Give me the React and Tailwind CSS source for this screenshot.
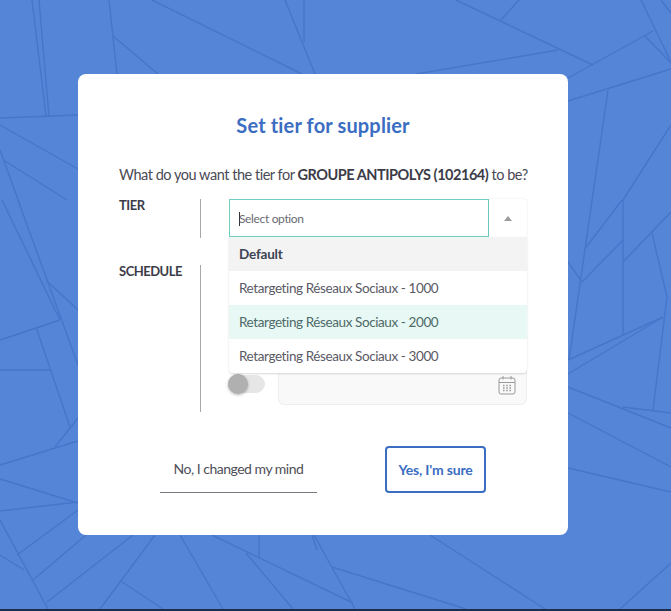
const LINES = [
  [32,0,46,116],[39,0,49,116],[0,118,78,115],[109,0,117,74],[113,36,158,74],[152,0,302,74],[285,0,315,74],[304,0,304,42],
  [0,125,78,169],[0,150,20,205],[5,161,67,200],[456,0,593,65],[501,20,519,0],[416,74,558,50],[568,78,653,31],[568,101,671,69],
  [641,0,671,62],[661,0,671,13],[644,35,671,63],[608,90,569,360],[623,200,671,125],[622,200,584,250],[568,262,582,282],[582,282,623,240],
  [623,200,623,335],[623,262,671,212],[652,233,667,297],[667,297,653,410],[568,360,663,317],[568,374,663,317],[568,387,671,428],[623,407,671,413],
  [568,413,671,467],[568,468,671,492],[620,609,671,563],
  [2,200,60,320],[18,200,78,365],[48,282,78,310],[0,340,60,320],[36,327,70,427],[0,370,50,370],[55,447,78,418],[0,465,78,441],
  [0,479,78,503],[0,511,78,502],[17,555,78,510],[0,520,48,609],[0,555,24,570],[33,580,86,535],[47,602,133,535],[100,609,155,535],
  [122,582,163,609],[180,535,223,609],[212,535,353,603],[259,535,259,558],[246,553,293,609],[314,535,355,609],[332,567,466,609],[430,535,545,609],[312,535,317,550],
];

function CalendarIcon() {
  return (
    <svg width="18" height="20" viewBox="0 0 18 20" fill="none" stroke="#9a9a9a" strokeWidth="1">
      <rect x="1" y="3" width="16" height="16" rx="2" />
      <path d="M1 7.5h16M5 1v3.5M13 1v3.5" />
      <path d="M5 10.5h1.6M8.2 10.5h1.6M11.4 10.5h1.6M5 13h1.6M8.2 13h1.6M11.4 13h1.6M5 15.5h1.6M8.2 15.5h1.6M11.4 15.5h1.6" strokeWidth="1.4" />
    </svg>
  );
}

export default function App() {
  return (
    <div className="relative w-[671px] h-[611px] overflow-hidden bg-[#5585d6] pt-[74px] pl-[78px] font-['Lato',sans-serif] text-[#4a4a55]">
      <svg className="absolute inset-0" width="671" height="611" viewBox="0 0 671 611" stroke="#4676ca" strokeWidth="1.4" fill="none">
        {LINES.map((l, i) => <line key={i} x1={l[0]} y1={l[1]} x2={l[2]} y2={l[3]} />)}
      </svg>
      <div className="absolute left-0 right-0 bottom-0 h-[2px] bg-[#1c2f4d]" />

      <div className="relative w-[490px] h-[461px] rounded-lg bg-white pt-[38px] px-[41px]">
        <h1 className="text-center text-[20px] leading-[26px] font-bold tracking-[0.15px] text-[#3b6dc2]">Set tier for supplier</h1>
        <p className="mt-[25px] text-[14.5px] leading-[24px] tracking-[-0.47px] whitespace-nowrap">
          What do you want the tier for <b className="text-[#3c3c48]">GROUPE ANTIPOLYS (102164)</b> to be?
        </p>

        <div className="mt-[12px] flex h-[39px]">
          <div className="w-[81px] text-[13px] leading-[12px] font-bold tracking-[-0.5px] text-[#3c3c48]">TIER</div>
          <div className="w-px bg-[#a8a8a8]" />
          <div className="relative ml-[28px] w-[298px]">
            <div className="flex h-[38px]">
              <div className="flex w-[260px] items-center border border-[#70cfc0] pl-[9px] pt-[1px] text-[12px] tracking-[-0.35px] text-[#6a6a72]">
                <span className="mr-[-1px] h-[14px] w-px bg-[#333]" />
                Select option
              </div>
              <div className="flex flex-1 items-center justify-center rounded-tr bg-white shadow-[0_0_2px_rgba(0,0,0,0.12)]">
                <span className="border-x-[4px] border-b-[5px] border-x-transparent border-b-[#9b9b9b]" />
              </div>
            </div>
            <ul className="absolute left-0 right-0 top-[38px] z-10 rounded-b bg-white text-[13.5px] leading-[34px] tracking-[-0.4px] shadow-[0_1px_2px_rgba(0,0,0,0.15)]">
              <li className="h-[34px] bg-[#f3f3f3] pl-[10px] font-bold tracking-[-0.2px] text-[#3d4354]">Default</li>
              <li className="h-[34px] pl-[10px] text-[#5a5a65]">Retargeting Réseaux Sociaux - 1000</li>
              <li className="h-[34px] bg-[#e8f8f4] pl-[10px] text-[#4d6a68]">Retargeting Réseaux Sociaux - 2000</li>
              <li className="h-[34px] pl-[10px] text-[#5a5a65]">Retargeting Réseaux Sociaux - 3000</li>
            </ul>
          </div>
        </div>

        <div className="mt-[27px] flex h-[147px]">
          <div className="w-[81px] text-[13px] leading-[12px] font-bold tracking-[-0.5px] text-[#3c3c48]">SCHEDULE</div>
          <div className="w-px bg-[#a8a8a8]" />
          <div className="ml-[27px] flex flex-1 items-end pb-[7px]">
            <div className="relative mb-[12px] h-[18px] w-[37px] rounded-full bg-[#e6e6e6]">
              <div className="absolute left-0 top-[-1px] h-[20px] w-[20px] rounded-full bg-[#b0b0b0] shadow-[0_1px_3px_rgba(0,0,0,0.3)]" />
            </div>
            <div className="ml-[13px] flex h-[60px] w-[249px] items-end justify-end rounded-md border border-[#eeeeee] bg-[#f9f9f9] pb-[9px] pr-[10px]">
              <CalendarIcon />
            </div>
          </div>
        </div>

        <div className="mt-[34px] flex items-start">
          <button className="ml-[41px] h-[47px] w-[157px] border-b border-[#77777f] pb-[2px] text-[14px] tracking-[-0.5px] text-[#4f4f58]">No, I changed my mind</button>
          <button className="ml-[68px] h-[47px] w-[101px] rounded border-2 border-[#3b6dc2] text-[14px] font-bold tracking-[-0.2px] text-[#3b6dc2]">Yes, I'm sure</button>
        </div>
      </div>
    </div>
  );
}
